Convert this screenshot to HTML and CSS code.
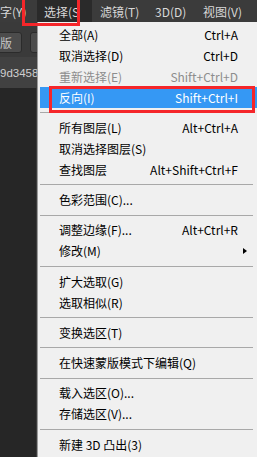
FILE: index.html
```html
<!DOCTYPE html>
<html lang="zh-CN">
<head>
<meta charset="utf-8">
<title>选择菜单</title>
<link rel="stylesheet" href="styles.css">
</head>
<body>
<div class="screen">
  <div class="menubar">
    <span class="bar-item first">字(Y)</span>
    <span class="bar-item active">选择(S</span>
    <span class="bar-item filter">滤镜(T)</span>
    <span class="bar-item three">3D(D)</span>
    <span class="bar-item">视图(V)</span>
  </div>
  <div class="workspace">
    <div class="side">
      <div class="toolbar">
        <span class="tbtn">版</span>
        <span class="tbtn second"></span>
      </div>
      <div class="tabrow"><span class="tab">9d3458</span></div>
      <div class="dark"></div>
    </div>
    <div class="menu">
      <div class="row"><span>全部(A)</span><span>Ctrl+A</span></div>
      <div class="row"><span>取消选择(D)</span><span>Ctrl+D</span></div>
      <div class="row disabled"><span>重新选择(E)</span><span>Shift+Ctrl+D</span></div>
      <div class="row hl"><span>反向(I)</span><span>Shift+Ctrl+I</span></div>
      <div class="sep"></div>
      <div class="row"><span>所有图层(L)</span><span>Alt+Ctrl+A</span></div>
      <div class="row"><span>取消选择图层(S)</span></div>
      <div class="row"><span>查找图层</span><span>Alt+Shift+Ctrl+F</span></div>
      <div class="sep"></div>
      <div class="row"><span>色彩范围(C)...</span></div>
      <div class="sep"></div>
      <div class="row"><span>调整边缘(F)...</span><span>Alt+Ctrl+R</span></div>
      <div class="row"><span>修改(M)</span><span class="arrow"></span></div>
      <div class="sep"></div>
      <div class="row"><span>扩大选取(G)</span></div>
      <div class="row"><span>选取相似(R)</span></div>
      <div class="sep"></div>
      <div class="row"><span>变换选区(T)</span></div>
      <div class="sep"></div>
      <div class="row"><span>在快速蒙版模式下编辑(Q)</span></div>
      <div class="sep"></div>
      <div class="row"><span>载入选区(O)...</span></div>
      <div class="row"><span>存储选区(V)...</span></div>
      <div class="sep"></div>
      <div class="row"><span>新建 3D 凸出(3)</span></div>
    </div>
  </div>
  <div class="redbox box-top"></div>
  <div class="redbox box-row"></div>
</div>
</body>
</html>
```

FILE: styles.css
```css
* { box-sizing: border-box; }
html, body { margin: 0; padding: 0; }
body {
  width: 257px;
  height: 457px;
  overflow: hidden;
  font-family: "Noto Sans CJK SC", "Microsoft YaHei", sans-serif;
  font-size: 12px;
  background: #282828;
}
.screen {
  position: relative;
  width: 257px;
  height: 457px;
  overflow: hidden;
  display: flex;
  flex-direction: column;
}
.menubar {
  height: 22px;
  flex: none;
  display: flex;
  align-items: stretch;
  background: #3b3b3b;
  color: #d8d8d8;
}
.bar-item {
  flex: none;
  display: flex;
  align-items: center;
  padding: 1px 0 0 8px;
  white-space: nowrap;
  overflow: hidden;
}
.bar-item.first { padding-left: 0; width: 37px; }
.bar-item.active {
  background: #2a2a2a;
  padding-left: 7px;
  width: 55px;
}
.bar-item.filter { width: 55px; }
.bar-item.three { width: 48px; }
.workspace {
  flex: 1;
  display: flex;
  min-height: 0;
}
.side {
  width: 37px;
  flex: none;
  display: flex;
  flex-direction: column;
  overflow: hidden;
  background: #282828;
}
.toolbar {
  height: 35px;
  flex: none;
  background: #3a3a3a;
  display: flex;
  align-items: flex-start;
  gap: 8px;
  padding-top: 10px;
  margin-left: -4px;
}
.tbtn {
  flex: none;
  width: 26px;
  height: 21px;
  background: #4c4c4c;
  border: 1px solid #2b2b2b;
  border-radius: 3px;
  color: #c4c4c4;
  font-size: 12px;
  display: flex;
  align-items: center;
  padding-left: 3px;
  line-height: 1;
}
.tbtn.second { width: 20px; }
.tabrow {
  height: 31px;
  flex: none;
  background: #414141;
  display: flex;
  align-items: center;
  padding-top: 1px;
}
.tab {
  color: #cfcfcf;
  font-family: "Liberation Sans", Arial, sans-serif;
  font-size: 11.5px;
  white-space: nowrap;
  margin-left: 0;
}
.dark { flex: 1; background: #262626; border-right: 1px solid #3c3c3c; }
.menu {
  flex: 1;
  background: #f0f0f0;
  border-left: 1px solid #9a9a9a;
  padding: 2px 0 0 2px;
  color: #000;
}
.row {
  height: 21px;
  display: flex;
  justify-content: space-between;
  align-items: center;
  padding: 0 19px 0 19px;
  white-space: nowrap;
  line-height: 1;
}
.row.disabled { color: #8d8d8d; }
.row.hl { background: #3598f4; color: #fff; }
.arrow {
  width: 0;
  height: 0;
  border-top: 3.5px solid transparent;
  border-bottom: 3.5px solid transparent;
  border-left: 4px solid #000;
  margin-right: -9px;
}
.sep {
  height: 9.25px;
  padding-top: 4px;
  margin-right: 4px;
}
.sep::before {
  content: "";
  display: block;
  height: 1px;
  background: #a8a8a8;
}
.redbox {
  position: absolute;
  border: 3px solid #f5262a;
}
.box-top { left: 22px; top: -4px; width: 58px; height: 30px; }
.box-row { left: 49px; top: 86px; width: 206px; height: 27px; }
```
